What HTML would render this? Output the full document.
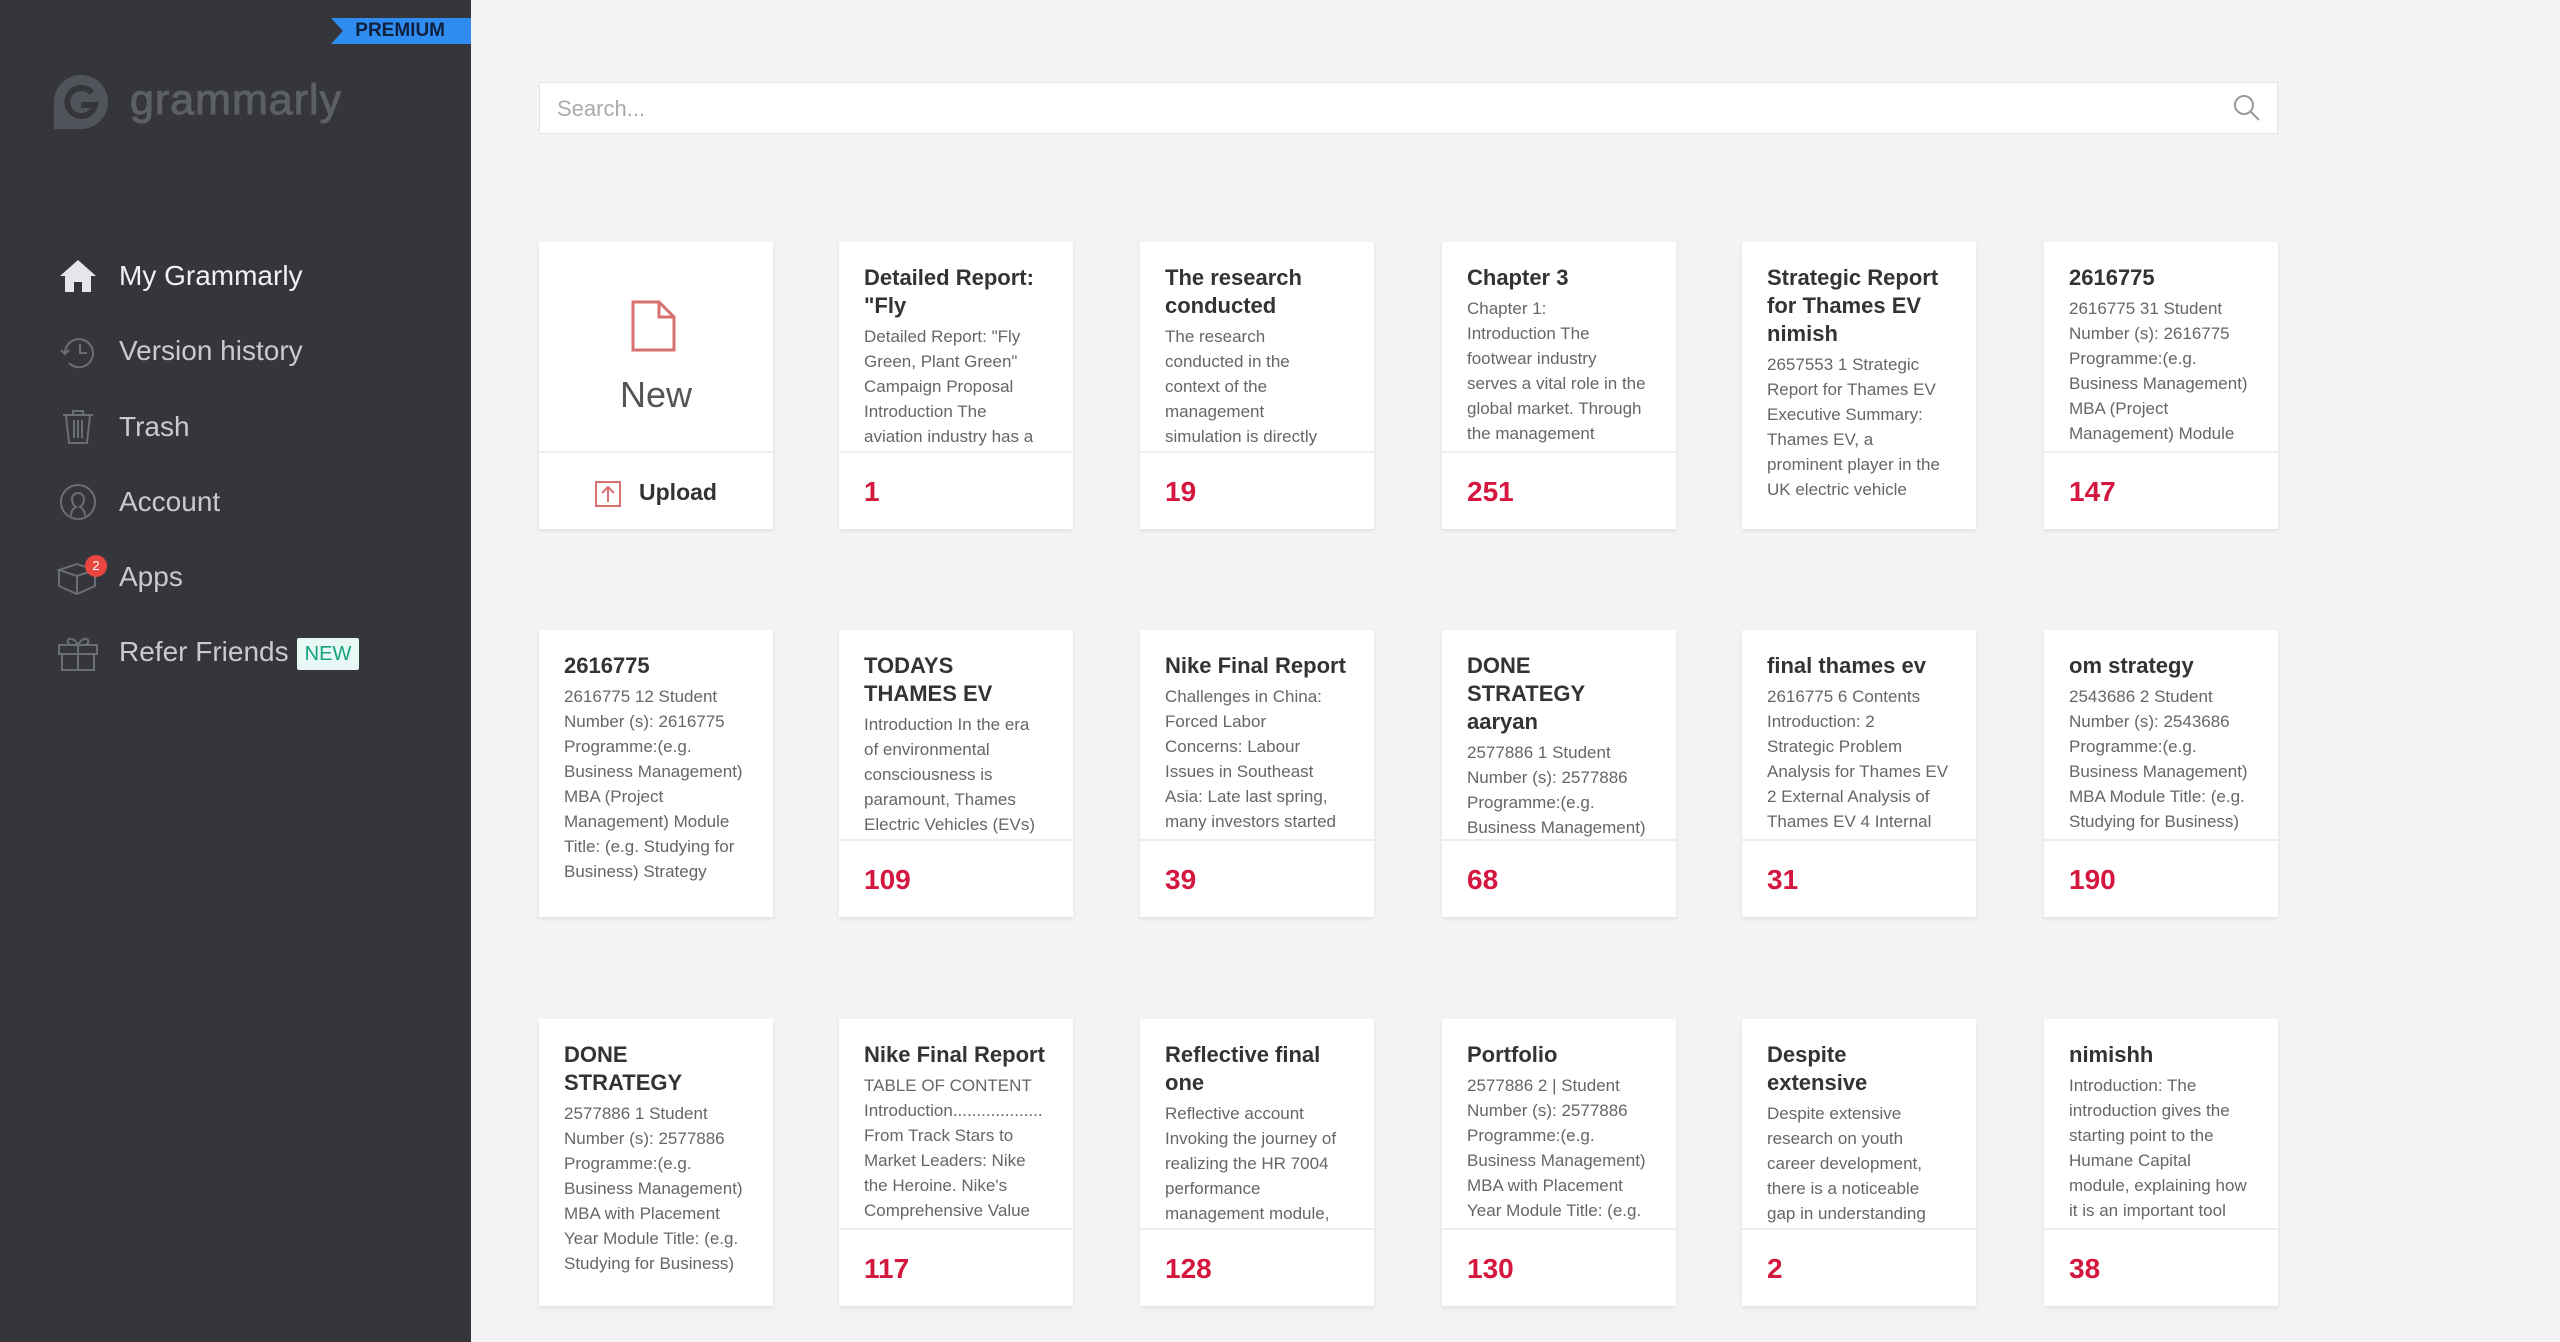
<!DOCTYPE html>
<html><head><meta charset="utf-8"><style>
*{margin:0;padding:0;box-sizing:border-box}
body{width:2560px;height:1342px;background:#f3f3f3;font-family:"Liberation Sans",sans-serif;position:relative;overflow:hidden}
#side{position:absolute;left:0;top:0;width:471px;height:1342px;background:#35363b}
.prem{position:absolute;left:331px;top:18px;width:140px;height:26px;background:#2f8cf0;color:#10203f;font-weight:bold;font-size:19px;line-height:26px;text-align:right;padding-right:26px;clip-path:polygon(0 0,100% 0,100% 100%,0 100%,12px 50%)}
.logo{position:absolute;left:130px;top:76px;font-size:43px;color:#5d5f66;font-weight:normal;letter-spacing:1px;-webkit-text-stroke:1px #5d5f66}
.nav{position:absolute;left:119px;font-size:28px;color:#c9cacd;height:40px;line-height:40px}
.ic{position:absolute;left:57px;width:42px;height:42px}
.new{position:absolute;left:297px;top:638px;width:62px;height:32px;background:#e8f8f4;color:#15a27c;font-size:20px;line-height:32px;text-align:center;border-radius:2px}
.search{position:absolute;left:539px;top:82px;width:1739px;height:52px;background:#fff;border:1px solid #e4e4e4;font-size:22px;color:#aaa;line-height:52px;padding-left:17px}
.card{position:absolute;width:234px;height:287px;background:#fff;box-shadow:0 2px 4px rgba(0,0,0,.08)}
.top{position:absolute;left:0;top:0;width:234px;height:209px;overflow:hidden;padding:22px 0 0 25px}
.full{height:287px}
.t{font-weight:bold;font-size:22px;line-height:28px;color:#333;white-space:nowrap}
.b{font-size:17px;line-height:25px;color:#666;white-space:nowrap;margin-top:4px}
.foot{position:absolute;left:0;top:209px;width:234px;height:78px;border-top:2px solid #eee;padding-left:25px;font-size:28px;font-weight:bold;color:#d4173f;line-height:78px}
</style></head><body>
<div id="side">
<div class="prem">PREMIUM</div>
<svg style="position:absolute;left:52px;top:73px" width="58" height="58" viewBox="0 0 58 58"><path d="M29 2a27 27 0 1 1 0 54H2V29A27 27 0 0 1 29 2z" fill="#52545b"/><path d="M40 20a14 14 0 1 0 3 12H29" fill="none" stroke="#35363b" stroke-width="6"/></svg>
<div class="logo">grammarly</div>
<svg class="ic" style="top:255px" viewBox="0 0 42 42"><path d="M3 21 21 5l18 16h-5v16H25V27h-8v10H8V21z" fill="#e6e6ea"/></svg>
<div class="nav" style="top:256px;color:#f2f2f2">My Grammarly</div>
<svg class="ic" style="top:331px" viewBox="0 0 42 42" fill="none" stroke="#6c6e75" stroke-width="2"><path d="M8 22a14 14 0 1 1 4 10"/><path d="M4 19l4 4 4-4"/><path d="M23 13v9h7"/></svg>
<div class="nav" style="top:331px">Version history</div>
<svg class="ic" style="top:406px" viewBox="0 0 42 42" fill="none" stroke="#6c6e75" stroke-width="2"><path d="M6 9h30M16 9V5h10v4M9 9l3 28h18l3-28M17 14v18M21 14v18M25 14v18"/></svg>
<div class="nav" style="top:407px">Trash</div>
<svg class="ic" style="top:481px" viewBox="0 0 42 42" fill="none" stroke="#6c6e75" stroke-width="2"><circle cx="21" cy="21" r="17"/><path d="M14 35c0-6 3-8 5-9-3-2-4-5-4-8a6 6 0 0 1 12 0c0 3-1 6-4 8 2 1 5 3 5 9"/></svg>
<div class="nav" style="top:482px">Account</div>
<svg class="ic" style="top:556px" viewBox="0 0 42 42" fill="none" stroke="#6c6e75" stroke-width="2"><path d="M2 14l18-6 18 6-18 6zM2 14v16l18 8 18-8V14M20 20v18"/></svg>
<div style="position:absolute;left:85px;top:555px;width:22px;height:22px;border-radius:50%;background:#e9473f;color:#fff;font-size:13px;line-height:22px;text-align:center">2</div>
<div class="nav" style="top:557px">Apps</div>
<svg class="ic" style="top:631px" viewBox="0 0 42 42" fill="none" stroke="#6c6e75" stroke-width="2"><path d="M2 14h38v9H2zM5 23h32v16H5zM21 14v25M21 14c-4-8-12-8-10-2 2 3 10 2 10 2zM21 14c4-8 12-8 10-2-2 3-10 2-10 2z"/></svg>
<div class="nav" style="top:632px">Refer Friends</div>
<div class="new">NEW</div>
</div>
<div class="search">Search...</div>
<svg style="position:absolute;left:2232px;top:93px" width="30" height="30" viewBox="0 0 30 30" fill="none" stroke="#999" stroke-width="2"><circle cx="12" cy="12" r="9"/><path d="M19 19l8 8"/></svg>

<div class="card" style="left:539px;top:242px">
<svg style="position:absolute;left:92px;top:58px" width="45" height="52" viewBox="0 0 45 52" fill="none" stroke="#d9726e" stroke-width="3"><path d="M2 2h26l15 15v33H2zM28 2v15h15"/></svg>
<div style="position:absolute;left:0;width:234px;top:132px;text-align:center;font-size:36px;color:#555">New</div>
<div class="foot" style="padding-left:0;color:#333;font-size:23px;text-align:center"><svg style="vertical-align:middle;margin-right:18px" width="26" height="26" viewBox="0 0 26 26" fill="none" stroke="#d9726e" stroke-width="2"><path d="M1 1h24v24H1zM13 21V6M7 12l6-6 6 6"/></svg>Upload</div>
</div>

<div class="card" style="left:839px;top:242px"><div class="top"><div class="t">Detailed Report:<br>"Fly</div><div class="b">Detailed Report: "Fly<br>Green, Plant Green"<br>Campaign Proposal<br>Introduction The<br>aviation industry has a</div></div><div class="foot">1</div></div>
<div class="card" style="left:1140px;top:242px"><div class="top"><div class="t">The research<br>conducted</div><div class="b">The research<br>conducted in the<br>context of the<br>management<br>simulation is directly</div></div><div class="foot">19</div></div>
<div class="card" style="left:1442px;top:242px"><div class="top"><div class="t">Chapter 3</div><div class="b">Chapter 1:<br>Introduction The<br>footwear industry<br>serves a vital role in the<br>global market. Through<br>the management</div></div><div class="foot">251</div></div>
<div class="card" style="left:1742px;top:242px"><div class="top full"><div class="t">Strategic Report<br>for Thames EV<br>nimish</div><div class="b">2657553 1 Strategic<br>Report for Thames EV<br>Executive Summary:<br>Thames EV, a<br>prominent player in the<br>UK electric vehicle</div></div></div>
<div class="card" style="left:2044px;top:242px"><div class="top"><div class="t">2616775</div><div class="b">2616775 31 Student<br>Number (s): 2616775<br>Programme:(e.g.<br>Business Management)<br>MBA (Project<br>Management) Module</div></div><div class="foot">147</div></div>

<div class="card" style="left:539px;top:630px"><div class="top full"><div class="t">2616775</div><div class="b">2616775 12 Student<br>Number (s): 2616775<br>Programme:(e.g.<br>Business Management)<br>MBA (Project<br>Management) Module<br>Title: (e.g. Studying for<br>Business) Strategy</div></div></div>
<div class="card" style="left:839px;top:630px"><div class="top"><div class="t">TODAYS<br>THAMES EV</div><div class="b">Introduction In the era<br>of environmental<br>consciousness is<br>paramount, Thames<br>Electric Vehicles (EVs)</div></div><div class="foot">109</div></div>
<div class="card" style="left:1140px;top:630px"><div class="top"><div class="t">Nike Final Report</div><div class="b">Challenges in China:<br>Forced Labor<br>Concerns: Labour<br>Issues in Southeast<br>Asia: Late last spring,<br>many investors started</div></div><div class="foot">39</div></div>
<div class="card" style="left:1442px;top:630px"><div class="top"><div class="t">DONE<br>STRATEGY<br>aaryan</div><div class="b">2577886 1 Student<br>Number (s): 2577886<br>Programme:(e.g.<br>Business Management)</div></div><div class="foot">68</div></div>
<div class="card" style="left:1742px;top:630px"><div class="top"><div class="t">final thames ev</div><div class="b">2616775 6 Contents<br>Introduction: 2<br>Strategic Problem<br>Analysis for Thames EV<br>2 External Analysis of<br>Thames EV 4 Internal</div></div><div class="foot">31</div></div>
<div class="card" style="left:2044px;top:630px"><div class="top"><div class="t">om strategy</div><div class="b">2543686 2 Student<br>Number (s): 2543686<br>Programme:(e.g.<br>Business Management)<br>MBA Module Title: (e.g.<br>Studying for Business)</div></div><div class="foot">190</div></div>

<div class="card" style="left:539px;top:1019px"><div class="top full"><div class="t">DONE<br>STRATEGY</div><div class="b">2577886 1 Student<br>Number (s): 2577886<br>Programme:(e.g.<br>Business Management)<br>MBA with Placement<br>Year Module Title: (e.g.<br>Studying for Business)</div></div></div>
<div class="card" style="left:839px;top:1019px"><div class="top"><div class="t">Nike Final Report</div><div class="b">TABLE OF CONTENT<br>Introduction...................<br>From Track Stars to<br>Market Leaders: Nike<br>the Heroine. Nike's<br>Comprehensive Value</div></div><div class="foot">117</div></div>
<div class="card" style="left:1140px;top:1019px"><div class="top"><div class="t">Reflective final<br>one</div><div class="b">Reflective account<br>Invoking the journey of<br>realizing the HR 7004<br>performance<br>management module,</div></div><div class="foot">128</div></div>
<div class="card" style="left:1442px;top:1019px"><div class="top"><div class="t">Portfolio</div><div class="b">2577886 2 | Student<br>Number (s): 2577886<br>Programme:(e.g.<br>Business Management)<br>MBA with Placement<br>Year Module Title: (e.g.</div></div><div class="foot">130</div></div>
<div class="card" style="left:1742px;top:1019px"><div class="top"><div class="t">Despite<br>extensive</div><div class="b">Despite extensive<br>research on youth<br>career development,<br>there is a noticeable<br>gap in understanding</div></div><div class="foot">2</div></div>
<div class="card" style="left:2044px;top:1019px"><div class="top"><div class="t">nimishh</div><div class="b">Introduction: The<br>introduction gives the<br>starting point to the<br>Humane Capital<br>module, explaining how<br>it is an important tool</div></div><div class="foot">38</div></div>
</body></html>
